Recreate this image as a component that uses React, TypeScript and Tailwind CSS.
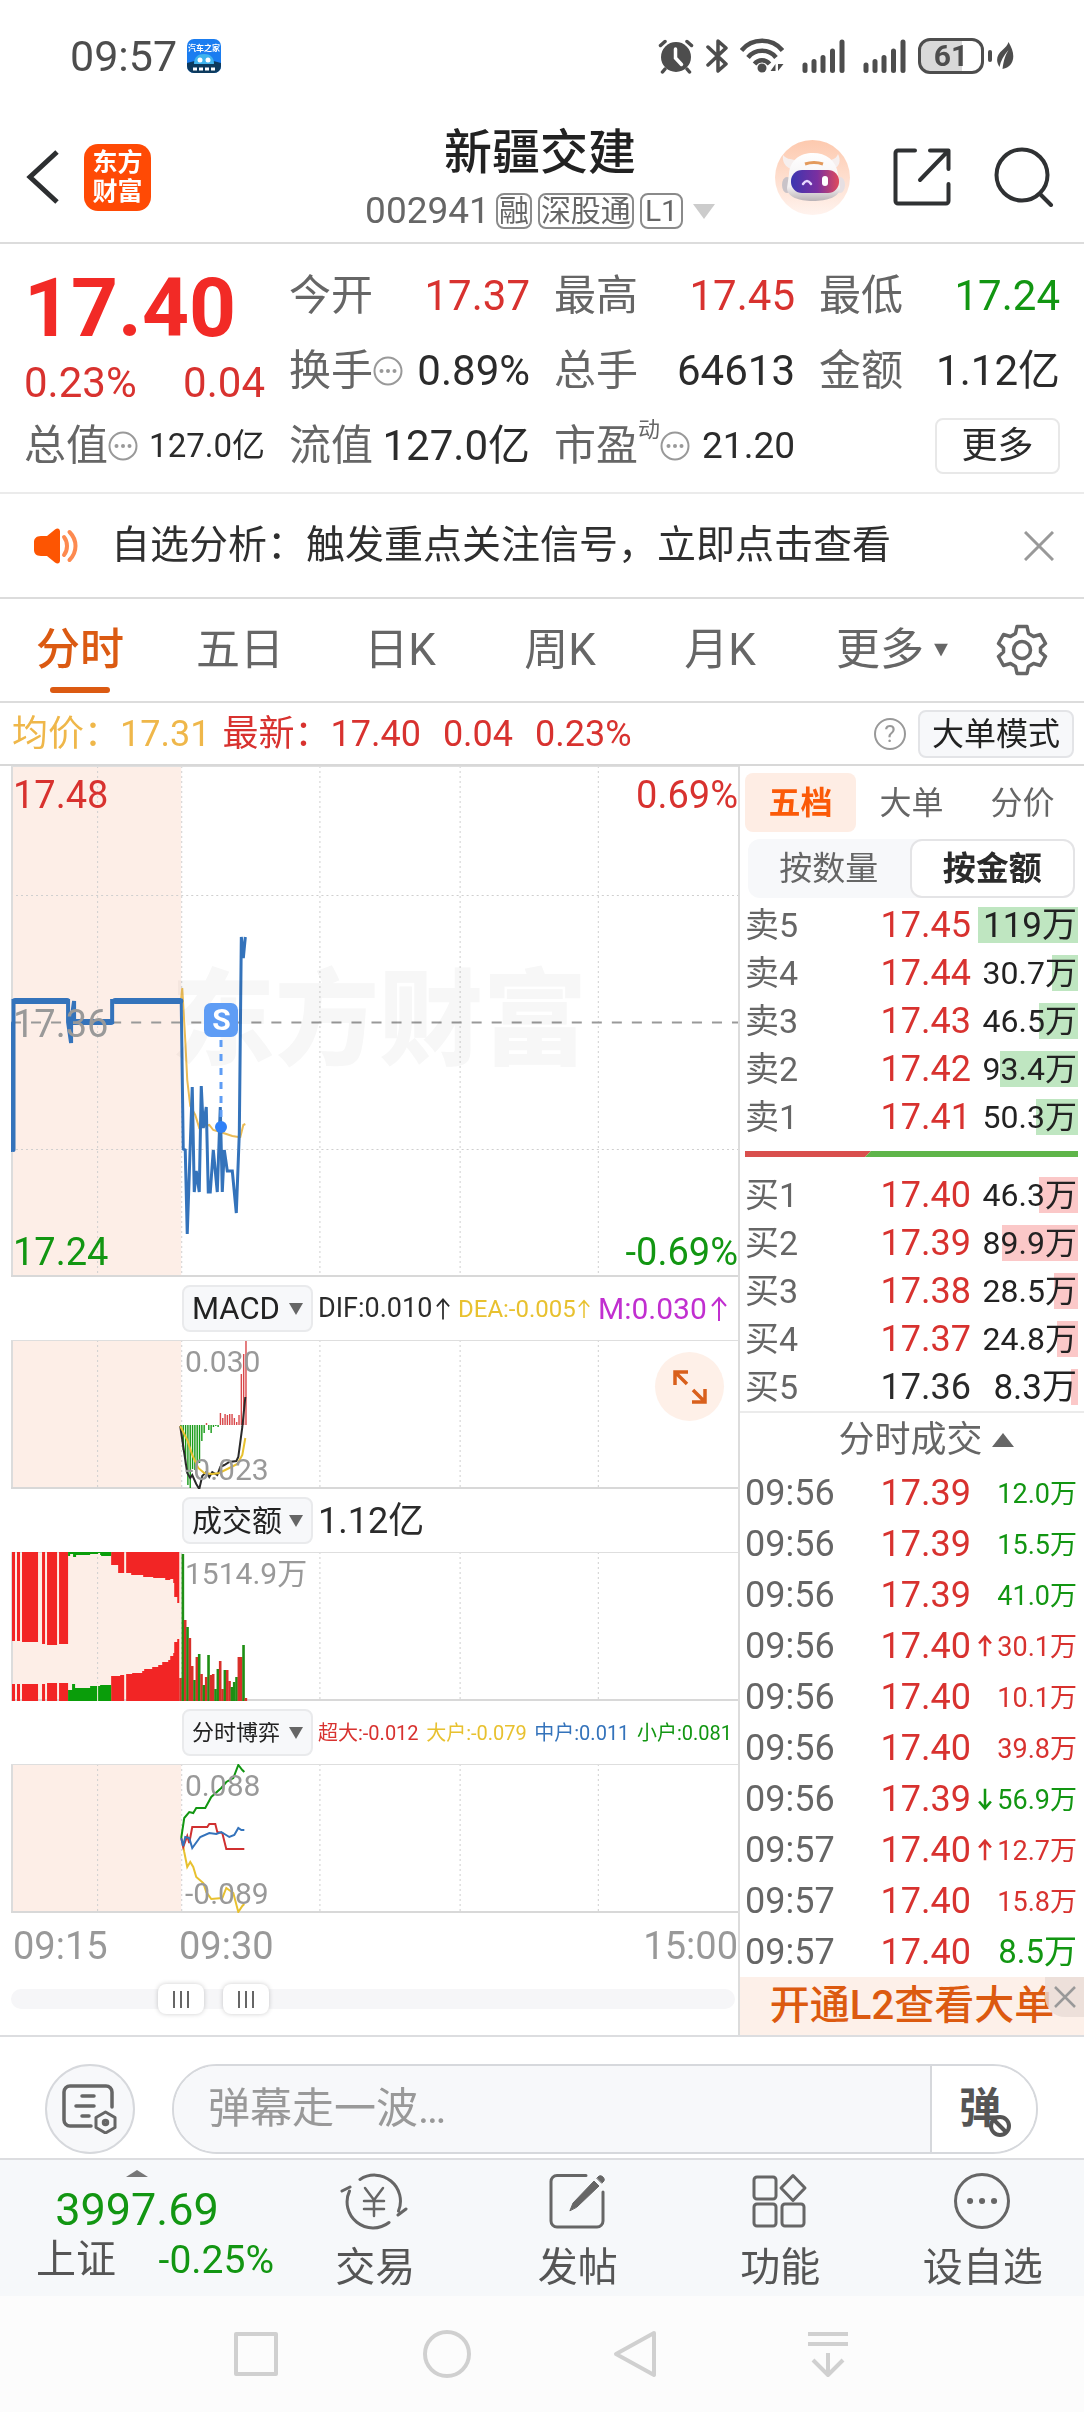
import type { ReactNode } from "react";

type Tone = "up" | "down" | "flat";

const toneText: Record<Tone, string> = {
  up: "text-[#d8322f]",
  down: "text-[#129612]",
  flat: "text-[#2b2b2b]",
};

type Level = { label: string; price: string; amount: number; text: string; tone: Tone };

const asks: Level[] = [
  { label: "卖5", price: "17.45", amount: 119, text: "119万", tone: "up" },
  { label: "卖4", price: "17.44", amount: 30.7, text: "30.7万", tone: "up" },
  { label: "卖3", price: "17.43", amount: 46.5, text: "46.5万", tone: "up" },
  { label: "卖2", price: "17.42", amount: 93.4, text: "93.4万", tone: "up" },
  { label: "卖1", price: "17.41", amount: 50.3, text: "50.3万", tone: "up" },
];

const bids: Level[] = [
  { label: "买1", price: "17.40", amount: 46.3, text: "46.3万", tone: "up" },
  { label: "买2", price: "17.39", amount: 89.9, text: "89.9万", tone: "up" },
  { label: "买3", price: "17.38", amount: 28.5, text: "28.5万", tone: "up" },
  { label: "买4", price: "17.37", amount: 24.8, text: "24.8万", tone: "up" },
  { label: "买5", price: "17.36", amount: 8.3, text: "8.3万", tone: "flat" },
];

type Trade = { time: string; price: string; volume: string; tone: Tone; dir?: "up" | "down" };

const trades: Trade[] = [
  { time: "09:56", price: "17.39", volume: "12.0万", tone: "down" },
  { time: "09:56", price: "17.39", volume: "15.5万", tone: "down" },
  { time: "09:56", price: "17.39", volume: "41.0万", tone: "down" },
  { time: "09:56", price: "17.40", volume: "30.1万", tone: "up", dir: "up" },
  { time: "09:56", price: "17.40", volume: "10.1万", tone: "up" },
  { time: "09:56", price: "17.40", volume: "39.8万", tone: "up" },
  { time: "09:56", price: "17.39", volume: "56.9万", tone: "down", dir: "down" },
  { time: "09:57", price: "17.40", volume: "12.7万", tone: "up", dir: "up" },
  { time: "09:57", price: "17.40", volume: "15.8万", tone: "up" },
  { time: "09:57", price: "17.40", volume: "8.5万", tone: "down" },
];

const macdBars = [
  -2, -25, -40, -60, -63, -44, -45, -42, -38, -16, -8, 2, -5, -8, -2, -1, -2, 12, 7, 11, 10, 11, 11,
  7, 3, 10, 51, 71, 84,
];

// positive = red bar, negative = green bar
const volumeBars = [
  23, -147, 81, -74, 63, 35, -21, 44, -47, 27, -16, 24, -46, 26, 27, -12, -32, 40, 12, -31, 31, 20,
  -14, -19, -24, 44, 44, -56, 3,
];

const auctionBars: [number, number, number, number][] = [
  [1, 3, 89, 17],
  [6, 3, 89, 17],
  [11, 16, 90, 17],
  [31, 3, 92, 17],
  [36, 10, 93, 18],
  [48, 9, 92, 18],
];

function Caret({ className }: { className: string }) {
  return (
    <svg viewBox="0 0 12 10" preserveAspectRatio="none" className={className} aria-hidden="true">
      <path d="M0 0h12L6 10z" fill="currentColor" />
    </svg>
  );
}

function Arrow({ down, className }: { down?: boolean; className: string }) {
  return (
    <svg viewBox="0 0 16 26" className={className} fill="none" stroke="currentColor" aria-hidden="true">
      <path d={down ? "M8 1v22M1 16l7 8 7-8" : "M8 25V3M1 10l7-8 7 8"} />
    </svg>
  );
}

function DotsCircle() {
  return (
    <svg viewBox="0 0 30 30" className="size-[30px] shrink-0" aria-hidden="true">
      <circle cx="15" cy="15" r="13.5" fill="none" stroke="#999" strokeWidth="2" />
      <g fill="#999">
        <circle cx="8.5" cy="15" r="2" />
        <circle cx="15" cy="15" r="2" />
        <circle cx="21.5" cy="15" r="2" />
      </g>
    </svg>
  );
}

function Signal() {
  return (
    <svg viewBox="0 0 43 34" className="h-[34px] w-[43px]" stroke="#4d4d4d" strokeWidth="5" strokeLinecap="round">
      <path d="M3 26v5.500M12 22.500v9M21 18.500v13M30.500 12v19.500M40 3v28.500" />
    </svg>
  );
}

function StatusBar() {
  return (
    <div className="flex h-28 items-center justify-between px-[70px] text-[#4d4d4d]">
      <div className="flex items-center gap-[10px]">
        <span className="text-[43px] leading-none">09:57</span>
        <svg viewBox="0 0 34 34" className="size-[34px]">
          <rect width="34" height="34" rx="7" fill="#1b7df0" />
          <path d="M0 24q17-6 34 0v3a7 7 0 0 1-7 7H7a7 7 0 0 1-7-7z" fill="#0c3a5e" />
          <path d="M7 25c0-7 4-10 10-10s10 3 10 10z" fill="#3fb4ee" />
          <circle cx="13" cy="21" r="2.500" fill="#fff" />
          <circle cx="21" cy="21" r="2.500" fill="#fff" />
          <text x="17" y="12" textAnchor="middle" fontSize="8" fontWeight="700" fill="#fff">汽车之家</text>
          <path d="M6 30h22" stroke="#fff" strokeWidth="3" strokeDasharray="4 2" />
        </svg>
      </div>
      <div className="flex items-center gap-3">
        <svg viewBox="0 0 36 36" className="size-9" fill="none" stroke="#4d4d4d" strokeLinecap="round">
          <circle cx="18" cy="19" r="15" fill="#4d4d4d" stroke="none" />
          <path d="M2.500 7.500 7 3.500M33.500 7.500 29 3.500M7 31l-2.500 3M29 31l2.500 3" strokeWidth="3.500" />
          <path d="M17.500 11v9l6 6.500" stroke="#fff" strokeWidth="3.500" />
        </svg>
        <svg viewBox="0 0 22 36" className="h-9 w-[22px]" fill="none" stroke="#4d4d4d" strokeWidth="3.500" strokeLinejoin="round" strokeLinecap="round">
          <path d="M2 9l18 17-8 7V3l8 7L2 27" />
        </svg>
        <svg viewBox="0 0 44 36" className="h-9 w-11" fill="none" stroke="#4d4d4d" strokeWidth="4.500">
          <path d="M1.500 12.500C12-.5 32-.5 42.500 12.500M8 19.500c7-9 21-9 28 0M14.500 26c4-5 11-5 15 0" />
          <circle cx="22" cy="30" r="4.500" fill="#4d4d4d" stroke="none" />
          <path d="M35.500 26v7h-5zM38 33v-7h5.500z" fill="#4d4d4d" stroke="none" />
        </svg>
        <div className="flex items-center gap-[18px] pl-[6px]">
          <Signal />
          <Signal />
        </div>
        <div className="flex items-center gap-1">
          <span className="flex h-9 w-[66px] items-center justify-center rounded-xl border-[3px] border-[#4d4d4d] bg-linear-to-r from-[#d9d9d9] from-68% to-white to-68% text-[30px] leading-none font-bold">
            61
          </span>
          <span className="h-3 w-1 rounded bg-[#4d4d4d]" />
          <svg viewBox="0 0 18 30" className="h-[30px] w-[18px]">
            <path d="M12.500 1c4 7 6 13 4 19-1.500 4.500-5 7-10 8 1-9 3-14 6-19-5 6-8 11-9 17-4-6-3-12 3-17 3-2.500 5-5 6-8z" fill="#4d4d4d" />
          </svg>
        </div>
      </div>
    </div>
  );
}

function Robot() {
  return (
    <svg viewBox="0 0 75 75" className="size-[75px]">
      <defs>
        <linearGradient id="halo" x1="0" y1="0" x2="0" y2="1">
          <stop offset="0" stopColor="#fdc9ae" />
          <stop offset="1" stopColor="#fff3ee" />
        </linearGradient>
        <linearGradient id="visor" x1="0" y1="0" x2="1" y2="0">
          <stop offset="0" stopColor="#3b36b0" />
          <stop offset=".55" stopColor="#7a2fa0" />
          <stop offset="1" stopColor="#e04a5c" />
        </linearGradient>
        <linearGradient id="shell" x1="0" y1="0" x2="0" y2="1">
          <stop offset="0" stopColor="#ffffff" />
          <stop offset=".7" stopColor="#f3f0f1" />
          <stop offset="1" stopColor="#b9b2b6" />
        </linearGradient>
      </defs>
      <circle cx="37.500" cy="37.500" r="37.500" fill="url(#halo)" />
      <path d="M16 29c-6-2-9-8-8-14 3 4 7 4 12 5zM56 20c4-1 6-3 7-6 3 6 2 12-4 15z" fill="#f6efee" />
      <ellipse cx="12" cy="45" rx="5" ry="8" fill="#c9c3c8" />
      <ellipse cx="65" cy="45" rx="5" ry="8" fill="#e6dfe2" />
      <path d="M14 34c1-14 11-21 24-21s23 7 25 21l2 14c0 9-13 13-27 13S12 57 12 48z" fill="url(#shell)" />
      <rect x="16" y="30" width="48" height="23" rx="11" fill="url(#visor)" />
      <path d="M30 24q9-3 18 0" stroke="#e39a5c" strokeWidth="3" fill="none" />
      <path d="M28 44q4-6 8 0" stroke="#e7d9ff" strokeWidth="2.500" fill="none" strokeLinecap="round" />
      <rect x="47" y="36" width="6" height="10" rx="3" fill="#fff" />
    </svg>
  );
}

function Header() {
  return (
    <header className="grid h-[132px] grid-cols-[1fr_auto_1fr] items-center border-b-2 border-[#dcdcdc] pr-[30px] pl-[26px]">
      <div className="flex items-center gap-6">
        <button type="button" aria-label="返回">
          <svg viewBox="0 0 34 54" className="h-[54px] w-[34px]" fill="none" stroke="#2d2f31" strokeWidth="5">
            <path d="M31 2 4 27l27 25" />
          </svg>
        </button>
        <a
          href="#home"
          className="flex size-[67px] flex-col items-center justify-center rounded-[14px] bg-[#ff4a05] text-[25px] leading-[29px] font-bold text-white"
        >
          <span>东方</span>
          <span>财富</span>
        </a>
      </div>
      <div className="flex flex-col items-center gap-[10px] pb-[2px] text-[#666]">
        <h1 className="text-5xl leading-[60px] font-medium text-[#222]">新疆交建</h1>
        <div className="flex items-center gap-[6px]">
          <span className="text-[37px] leading-9">002941</span>
          <span className="rounded-lg border-2 border-[#8a8a8a] px-px text-[30px] leading-8">融</span>
          <span className="rounded-lg border-2 border-[#8a8a8a] px-px text-[30px] leading-8">深股通</span>
          <span className="rounded-lg border-2 border-[#8a8a8a] px-[3px] text-[30px] leading-8">L1</span>
          <Caret className="ml-1 h-[15px] w-[22px] text-[#ccc]" />
        </div>
      </div>
      <div className="flex items-center justify-end gap-[43px]">
        <button type="button" aria-label="助手">
          <Robot />
        </button>
        <button type="button" aria-label="分享">
          <svg viewBox="0 0 58 58" className="size-[58px]" fill="none" stroke="#2f3133" strokeWidth="4" strokeLinecap="round" strokeLinejoin="round">
            <path d="M22 2.500H5A2.500 2.500 0 0 0 2.500 5v48A2.500 2.500 0 0 0 5 55.500h48a2.500 2.500 0 0 0 2.500-2.500V36M37 2.500h18.500V21M55 3 27 32" />
          </svg>
        </button>
        <button type="button" aria-label="搜索">
          <svg viewBox="0 0 60 60" className="size-[60px]" fill="none" stroke="#2f3133" strokeWidth="4" strokeLinecap="round">
            <circle cx="28" cy="28" r="25.500" />
            <path d="m46 47 11 11" />
          </svg>
        </button>
      </div>
    </header>
  );
}

function Stat({ label, value, tone = "flat", size = "text-[42px]", dots, sup }: {
  label: string;
  value: string;
  tone?: Tone;
  size?: string;
  dots?: boolean;
  sup?: string;
}) {
  return (
    <div className="flex h-[75px] items-center whitespace-nowrap">
      <span className="text-[42px] leading-none text-[#666]">{label}</span>
      {sup && <sup className="-top-4 self-center text-[22px] leading-none text-[#666]">{sup}</sup>}
      {dots && <DotsCircle />}
      <span className={`ml-auto leading-none ${size} ${toneText[tone]}`}>{value}</span>
    </div>
  );
}

function Quote() {
  return (
    <section className="grid grid-cols-4 gap-x-6 border-b-2 border-[#ebebeb] px-6 pt-[14px] pb-[9px]">
      <div className={toneText.up}>
        <p className="h-[100px] text-[82px] leading-[100px] font-bold text-[#f22a26]">17.40</p>
        <p className="flex h-[50px] items-center justify-between text-[42px] leading-none">
          <span>0.23%</span>
          <span>0.04</span>
        </p>
        <Stat label="总值" value="127.0亿" size="text-[33px]" dots />
      </div>
      <div>
        <Stat label="今开" value="17.37" tone="up" />
        <Stat label="换手" value="0.89%" dots />
        <Stat label="流值" value="127.0亿" />
      </div>
      <div>
        <Stat label="最高" value="17.45" tone="up" />
        <Stat label="总手" value="64613" />
        <Stat label="市盈" value="21.20" size="text-[37px]" sup="动" dots />
      </div>
      <div>
        <Stat label="最低" value="17.24" tone="down" />
        <Stat label="金额" value="1.12亿" />
        <div className="flex h-[75px] items-center justify-end">
          <button type="button" className="h-14 w-[125px] rounded-lg border-2 border-[#e8e8e8] text-4xl leading-none text-[#2b2b2b]">
            更多
          </button>
        </div>
      </div>
    </section>
  );
}

function Notice() {
  return (
    <div className="flex h-[105px] items-center border-b-2 border-[#dcdcdc] pr-[30px] pl-[33px]">
      <svg viewBox="0 0 46 38" className="h-[38px] w-[46px]">
        <path d="M8 9h6L22 2.500c2.500-2 5-1 5 2v29c0 3-2.500 4-5 2L14 29H8c-5 0-7-3-7-6v-8c0-3 2-6 7-6z" fill="#fd5502" />
        <path d="M31 10c4 5 4 13 0 18M36.500 5c8 8 8 20 0 28" fill="none" stroke="#fd8a50" strokeWidth="4" strokeLinecap="round" />
      </svg>
      <p className="ml-8 flex-1 text-[39px] leading-none whitespace-nowrap text-[#2f2f2f]">
        自选分析：触发重点关注信号，立即点击查看
      </p>
      <button type="button" aria-label="关闭">
        <svg viewBox="0 0 30 30" className="size-[30px]" stroke="#999" strokeWidth="3">
          <path d="m1 1 28 28M29 1 1 29" />
        </svg>
      </button>
    </div>
  );
}

function Gear() {
  return (
    <svg viewBox="0 0 52 52" className="size-[52px]" fill="none" stroke="#666" strokeWidth="3.500" strokeLinejoin="round">
      <path d="M21 2.500h10l1.500 7 5 3 7-2 5 9-5 4.500v4l5 4.500-5 9-7-2-5 3-1.500 7H21l-1.500-7-5-3-7 2-5-9 5-4.500v-4l-5-4.500 5-9 7 2 5-3z" />
      <circle cx="26" cy="26" r="8.500" />
    </svg>
  );
}

function PeriodTabs() {
  return (
    <nav className="flex h-26 border-b-2 border-[#dcdcdc] text-[44px] text-[#666]">
      <button type="button" className="relative flex-1 font-medium text-[#db5a12]">
        分时
        <span className="absolute bottom-2 left-1/2 h-[6px] w-[60px] -translate-x-1/2 rounded-full bg-[#db5a12]" />
      </button>
      {["五日", "日K", "周K", "月K"].map((tab) => (
        <button key={tab} type="button" className="flex-1">
          {tab}
        </button>
      ))}
      <button type="button" className="relative flex-1">
        更多
        <Caret className="absolute top-1/2 right-3 h-[13px] w-[14px] -translate-y-1/2" />
      </button>
      <button type="button" className="flex w-[124px] items-center justify-center" aria-label="设置">
        <Gear />
      </button>
    </nav>
  );
}

function PriceLine() {
  return (
    <div className="flex h-[63px] items-center border-b-2 border-[#d8d8d8] pr-[10px] pl-3 text-4xl leading-none whitespace-nowrap">
      <span className="text-[#efb74a]">均价：17.31</span>
      <span className={`ml-3 flex gap-[22px] ${toneText.up}`}>
        <span>最新：17.40</span>
        <span>0.04</span>
        <span>0.23%</span>
      </span>
      <button
        type="button"
        aria-label="帮助"
        className="mr-3 ml-auto size-8 rounded-full border-2 border-[#999] text-[24px] leading-[28px] text-[#999]"
      >
        ?
      </button>
      <button type="button" className="h-12 rounded-lg border-2 border-[#e3e4e7] bg-[#f7f8fa] px-3 text-[32px] leading-none text-[#222]">
        大单模式
      </button>
    </div>
  );
}

function Plot({ height, rows, children }: { height: number; rows?: number[]; children: ReactNode }) {
  return (
    <svg viewBox={`0 0 726 ${height}`} preserveAspectRatio="none" className="block h-full w-full" aria-hidden="true">
      <rect width="170" height={height} fill="#fdeee7" />
      <g stroke="#cfcfcf" strokeDasharray="2 3">
        {[86, 170, 308, 448, 586].map((x) => (
          <path key={x} d={`M${x}.5 0V${height}`} />
        ))}
        {rows?.map((y) => <path key={y} d={`M0 ${y}.5H726`} />)}
      </g>
      <path d={`M1 0V${height}`} stroke="#dcdcdc" strokeWidth="2" />
      <path d="M0 .5H726" stroke="#dedede" />
      <path d={`M0 ${height - 1}H726`} stroke="#d8d8d8" strokeWidth="2" />
      {children}
    </svg>
  );
}

function MainPlot() {
  return (
    <div className="relative h-[511px]">
      <span className="absolute inset-0 flex items-center pl-[160px] text-[104px] font-black text-[#f7f7f7]">
        东方财富
      </span>
      <div className="absolute inset-0 mix-blend-multiply">
        <Plot height={511} rows={[129, 383]}>
          <path d="M0 256.500H726" stroke="#999" strokeWidth="2" strokeDasharray="10 10" />
          <path
            d="M170 232l1-10 3 52 2 40 3 26 5 9 4 13 10-3 4 5 10 3 9 3 6 1h2l3-12 2-1"
            fill="none"
            stroke="#eabb55"
            strokeWidth="2"
          />
          <path
            d="M0 384V262M1 384V258M2.500 384V235H57V256L60 277V256L63 235V256H101V235H170"
            fill="none"
            stroke="#3473bb"
            strokeWidth="4"
            strokeLinecap="round"
          />
          <path d="M4 235H56M104 235H169M62 256H100" stroke="#3473bb" strokeWidth="6" strokeLinecap="round" />
          <path
            d="M170 235l2 148 2 1 2 84 5-147 2 105 2-21 3 21 2-106 2 42 3-21 2 85h2l3-42 4 42 3-85 2 85 2-42 3 21h5l4 42 3-80 2-196 2 21 2-21"
            fill="none"
            stroke="#3473bb"
            strokeWidth="3"
          />
        </Plot>
      </div>
      <div className="absolute inset-0 flex flex-col justify-between pt-[10px] pb-[6px] pl-[2px] text-[38px] leading-[38px]">
        <div className={`flex justify-between ${toneText.up}`}>
          <span>17.48</span>
          <span>0.69%</span>
        </div>
        <span className="text-[#999]">17.36</span>
        <div className={`flex justify-between ${toneText.down}`}>
          <span>17.24</span>
          <span>-0.69%</span>
        </div>
      </div>
      {/* Sell marker */}
      <div className="absolute top-[237px] left-[26.600%] flex w-[34px] flex-col items-center">
        <span className="flex size-[34px] items-center justify-center rounded-[7px] bg-[#5f9df5] text-[30px] leading-none font-bold text-white">
          S
        </span>
        <svg viewBox="0 0 12 96" className="h-24 w-3">
          <path d="M6 3v82" stroke="#5f9df5" strokeWidth="3" strokeDasharray="7 7" />
          <circle cx="6" cy="90" r="6" fill="#2f80f7" />
        </svg>
      </div>
    </div>
  );
}

function IndicatorHead({ name, size, children }: { name: string; size: string; children: ReactNode }) {
  return (
    <div className="flex h-[63px] items-center pl-[171px] whitespace-nowrap">
      <label className="relative h-[47px] w-[131px] shrink-0">
        <select
          aria-label="指标"
          className={`h-full w-full appearance-none rounded-lg border-2 border-[#e9eaec] bg-[#f7f8fa] pl-2 leading-none text-[#222] ${size}`}
        >
          <option>{name}</option>
        </select>
        <Caret className="pointer-events-none absolute top-1/2 right-[10px] h-3 w-[14px] -translate-y-1/2 text-[#666]" />
      </label>
      <div className="flex min-w-0 flex-1 items-center pl-[5px] leading-none">{children}</div>
    </div>
  );
}

function PlotLabels({ top, bottom }: { top: string; bottom?: string }) {
  return (
    <div className="absolute inset-0 flex flex-col justify-between pt-[7px] pb-1 pl-[174px] text-[30px] leading-[30px] text-[#999]">
      <span>{top}</span>
      {bottom && <span>{bottom}</span>}
    </div>
  );
}

function ChartColumn() {
  return (
    <div className="min-w-0 flex-1 pl-[11px]">
      <MainPlot />

      <IndicatorHead name="MACD" size="text-[31px]">
        <span className="flex flex-1 items-center gap-1 text-[27px] text-[#2b2b2b]">
          DIF:0.010
          <Arrow className="h-7 w-[14px] stroke-2" />
        </span>
        <span className="flex flex-1 items-center gap-[2px] text-[24px] text-[#e8c12f]">
          DEA:-0.005
          <Arrow className="h-7 w-3 stroke-2" />
        </span>
        <span className="flex flex-1 items-center gap-1 text-[30px] text-[#c12fd0]">
          M:0.030
          <Arrow className="h-7 w-4 stroke-2" />
        </span>
      </IndicatorHead>
      <div className="relative h-[149px]">
        <Plot height={149}>
          {macdBars.map((v, i) => (
            <rect
              key={i}
              x={169 + i * 2.32}
              y={v > 0 ? 85 - v : 85}
              width="1.400"
              height={Math.abs(v)}
              fill={v > 0 ? "#d8474a" : "#179a17"}
            />
          ))}
          <path
            d="M169 86 173 113 176 133 179 138 181 135 185 144 188 149 191 136 195 132 198 137 201 132 206 135 209 127 213 125 218 122 225 121 227 117 231 87 234 57"
            fill="none"
            stroke="#2b2b2b"
            strokeWidth="2"
          />
          <path
            d="M169 86 176 100 181 115 187 128 193 133 201 134 208 133 218 128 226 124 231 115 234 98"
            fill="none"
            stroke="#e8c12f"
            strokeWidth="2"
          />
        </Plot>
        <PlotLabels top="0.030" bottom="-0.023" />
        <button
          type="button"
          aria-label="展开"
          className="absolute top-3 right-[14px] flex size-[69px] items-center justify-center rounded-full bg-[#fef0e8]"
        >
          <svg viewBox="0 0 34 34" className="size-[34px]" fill="none" stroke="#d9601c" strokeWidth="3.500">
            <path d="M2 15V2h13M2 2l12 12M32 19v13H19M32 32 20 20" />
          </svg>
        </button>
      </div>

      <IndicatorHead name="成交额" size="text-[30px]">
        <span className="text-[36px] text-[#2b2b2b]">1.12亿</span>
      </IndicatorHead>
      <div className="relative h-[149px]">
        <Plot height={149}>
          <g fill="#f22525">
            {auctionBars.map(([x, w, top, bottom]) => (
              <path key={x} d={`M${x} 0h${w}v${top}h-${w}zM${x} ${149 - bottom}h${w}v${bottom}h-${w}z`} />
            ))}
            <path d="M100 0V13h7v8h6V0zM115 0V21h5v2h12v2h10v1h12v2h5v-1h3v4h1v14h3v6h2V0z" />
            <path d="M100 149v-25h9v-1h4v26zM115 149v-27h6v-1h10v-2h2v-2h8v-2h6v-2h4v-3h6v-2h2v-4h3v-3h1v-11h3v-3h2v62z" />
          </g>
          <g fill="#0a9d0a">
            <path d="M57 0V4h2V2h3v3h3V3h14V2h8V1h2v2h1v1h10V0z" />
            <path d="M57 149v-11h4v-6h3v4h15v-2h10v-1h11v16z" />
          </g>
          <path d="M86.500 131v18" stroke="#fdeee7" />
          {volumeBars.map((v, i) => (
            <rect
              key={i}
              x={168 + i * 2.33}
              y={149 - Math.abs(v)}
              width="2.600"
              height={Math.abs(v)}
              fill={v > 0 ? "#d8302a" : "#1e8f14"}
            />
          ))}
        </Plot>
        <PlotLabels top="1514.9万" />
      </div>

      <IndicatorHead name="分时博弈" size="text-[22px]">
        <div className="flex flex-1 justify-between pr-[6px] text-[20px]">
          <span className={toneText.up}>超大:-0.012</span>
          <span className="text-[#e8c12f]">大户:-0.079</span>
          <span className="text-[#3473bb]">中户:0.011</span>
          <span className={toneText.down}>小户:0.081</span>
        </div>
      </IndicatorHead>
      <div className="relative h-[149px]">
        <Plot height={149}>
          <g fill="none" strokeWidth="2">
            <path
              d="M171 76 173 88 176 103 179 98 182 103 185 113 192 119 195 128 200 135 211 134 215 124 222 129 227 148 231 142 233 140"
              stroke="#e8c12f"
            />
            <path
              d="M170 74 172 83 176 72 178 79 181 63 196 63 198 60 204 60 206 68 211 69 215 85 233 85"
              stroke="#d03030"
            />
            <path
              d="M170 74 172 82 174 73 178 74 181 84 189 73 198 69 205 70 210 68 218 73 223 71 227 64 230 66 233 66"
              stroke="#3473bb"
            />
            <path
              d="M170 74 173 54 178 48 182 49 185 44 194 44 200 33 210 24 215 18 222 14 227 1 231 6 233 8"
              stroke="#129612"
            />
          </g>
        </Plot>
        <PlotLabels top="0.088" bottom="-0.089" />
      </div>

      <div className="flex h-[66px] items-center pl-[2px] text-[38px] leading-none text-[#999]">
        <span className="w-[166px]">09:15</span>
        <span>09:30</span>
        <span className="ml-auto">15:00</span>
      </div>
      <div className="relative mr-[3px] mb-4 flex h-10 items-center">
        <div className="h-5 w-full rounded-full bg-[#f6f6f8]" />
        {[
          { label: "开始时间", value: 217 },
          { label: "结束时间", value: 313 },
        ].map((thumb) => (
          <input
            key={thumb.label}
            type="range"
            aria-label={thumb.label}
            max={1000}
            defaultValue={thumb.value}
            className="pointer-events-none absolute inset-0 h-full w-full appearance-none bg-transparent [&::-webkit-slider-thumb]:pointer-events-auto [&::-webkit-slider-thumb]:h-[30px] [&::-webkit-slider-thumb]:w-[46px] [&::-webkit-slider-thumb]:appearance-none [&::-webkit-slider-thumb]:rounded-lg [&::-webkit-slider-thumb]:shadow-[0_0_5px_rgba(0,0,0,0.2)] [&::-webkit-slider-thumb]:[background:linear-gradient(#666,#666)_15px_50%/2px_17px_no-repeat,linear-gradient(#666,#666)_22px_50%/2px_17px_no-repeat,linear-gradient(#666,#666)_29px_50%/2px_17px_no-repeat,#fff]"
          />
        ))}
      </div>
    </div>
  );
}

function BookTable({ levels, bar }: { levels: Level[]; bar: string }) {
  return (
    <table className="w-full">
      <tbody>
        {levels.map((level) => (
          <tr key={level.label} className="h-12 leading-none">
            <th scope="row" className="p-0 text-left text-[34px] font-normal text-[#666]">
              {level.label}
            </th>
            <td className={`p-0 text-right text-4xl ${toneText[level.tone]}`}>{level.price}</td>
            <td className="relative w-[107px] p-0 pr-px text-right text-[#222]">
              <span
                className={`absolute inset-y-[6px] right-0 ${bar}`}
                style={{ width: Math.round((level.amount / 119) * 100) }}
              />
              <span className={level.text.length > 4 ? "relative text-[32px]" : "relative text-[35px]"}>
                {level.text}
              </span>
            </td>
          </tr>
        ))}
      </tbody>
    </table>
  );
}

function BookColumn() {
  return (
    <aside className="flex w-[346px] shrink-0 flex-col border-l-2 border-[#dcdcdc] whitespace-nowrap">
      <div className="pr-[6px] pl-[5px] pt-[7px]">
        <div className="flex h-[59px] text-[32px] text-[#666]">
          <button type="button" className="flex-1 rounded-lg bg-[#feede4] font-bold text-[#fb5a08]">
            五档
          </button>
          <button type="button" className="flex-1">大单</button>
          <button type="button" className="flex-1">分价</button>
        </div>
        <div className="mx-[3px] mt-[7px] flex h-[59px] rounded-xl bg-[#f7f8fa] text-[33px] leading-none text-[#666]">
          <button type="button" className="flex-1">按数量</button>
          <button type="button" className="flex-1 rounded-xl border-2 border-[#e4e4e6] bg-white font-bold text-[#2b2b2b]">
            按金额
          </button>
        </div>
        <div className="mt-[3px]">
          <BookTable levels={asks} bar="bg-[#bfe6c1]" />
        </div>
        <svg viewBox="0 0 333 6" preserveAspectRatio="none" className="mt-[10px] mb-[14px] h-[6px] w-full">
          <path d="M0 0h126l-6 6H0z" fill="#d94f4d" />
          <path d="M126 0h207v6H120z" fill="#5fb54a" />
        </svg>
        <BookTable levels={bids} bar="bg-[#fbc8c8]" />
      </div>

      <h2 className="flex h-14 items-center justify-center gap-[9px] border-t-2 border-[#ebebeb] pl-7 text-4xl font-normal text-[#666]">
        分时成交
        <Caret className="h-[14px] w-[22px] rotate-180" />
      </h2>
      <table className="mr-[6px] ml-[5px] leading-none">
        <tbody>
          {trades.map((trade, i) => (
            <tr key={i} className="h-[51px]">
              <td className="p-0 text-4xl text-[#666]">{trade.time}</td>
              <td className={`p-0 text-right text-4xl ${toneText.up}`}>{trade.price}</td>
              <td className={`w-[107px] p-0 pr-px ${toneText[trade.tone]}`}>
                <span className="flex items-center justify-end gap-1">
                  {trade.dir && <Arrow down={trade.dir === "down"} className="-ml-1 h-[22px] w-4 stroke-3" />}
                  <span className={trade.volume.length > 4 ? "pt-1 text-[27px]" : "text-[33px]"}>{trade.volume}</span>
                </span>
              </td>
            </tr>
          ))}
        </tbody>
      </table>
      <div className="relative flex flex-1 items-center justify-center bg-[#fdf0e9]">
        <a href="#l2" className="text-[40px] leading-none font-medium text-[#dc5a10]">
          开通L2查看大单
        </a>
        <button
          type="button"
          aria-label="关闭"
          className="absolute top-0 right-0 flex h-10 w-[39px] items-center justify-center rounded-bl-[20px] bg-[#e8dcd6]/80"
        >
          <svg viewBox="0 0 22 22" className="size-[22px]" stroke="#999" strokeWidth="2.500">
            <path d="m1 1 20 20M21 1 1 21" />
          </svg>
        </button>
      </div>
    </aside>
  );
}

function CommentBar() {
  return (
    <form className="flex h-[125px] items-center gap-[37px] border-y-2 border-[#dcdde0] pt-[22px] pr-[46px] pl-[45px]">
      <button
        type="button"
        aria-label="弹幕设置"
        className="flex size-[90px] items-center justify-center rounded-full border-2 border-[#d6d8dc] bg-[#f7f8fa]"
      >
        <svg viewBox="0 0 56 50" className="h-[50px] w-14" fill="none" stroke="#666" strokeWidth="3.500" strokeLinecap="round" strokeLinejoin="round">
          <path d="M50 23V8a6 6 0 0 0-6-6H8a6 6 0 0 0-6 6v28a6 6 0 0 0 6 6h21M20 12h12M14 22h18M20 32h7" />
          <path d="m43.500 28 9.500 5.500v10L43.500 49 34 43.500v-10z" strokeWidth="3" />
          <circle cx="43.500" cy="38.500" r="2" />
        </svg>
      </button>
      <div className="flex h-[90px] flex-1 overflow-hidden rounded-full border-2 border-[#d6d8dc]">
        <input
          type="text"
          aria-label="弹幕"
          placeholder="弹幕走一波…"
          className="min-w-0 flex-1 bg-[#f7f8fa] pl-[34px] text-[42px] leading-none placeholder:text-[#999]"
        />
        <button
          type="button"
          className="relative w-[106px] border-l-2 border-[#d6d8dc] bg-white pr-2 text-[42px] leading-none font-bold text-[#555]"
        >
          弹
          <svg viewBox="0 0 24 24" className="absolute right-6 bottom-[14px] size-6" stroke="#555" strokeWidth="4">
            <circle cx="12" cy="12" r="9" fill="#fff" />
            <path d="m6 6 12 12" />
          </svg>
        </button>
      </div>
    </form>
  );
}

const actions = [
  {
    label: "交易",
    icon: (
      <>
        <path d="M14 6.500A26 26 0 0 1 52.500 38M52 42l8-6M43 49.500A26 26 0 0 1 3.500 18M4 14l-8 4" />
        <path d="m19 15 9 12 9-12M28 27v16M18 28h20M18 36h20" strokeWidth="2.500" />
      </>
    ),
  },
  {
    label: "发帖",
    icon: (
      <>
        <path d="M37 2.500H8A6 6 0 0 0 2 8.500V48a6 6 0 0 0 6 6h40a6 6 0 0 0 6-6V19" />
        <path d="M21 37.500 24 30 45 8l5 5-22 21zM48 5l2-2q2-1 4 1t1 4l-2 2z" fill="#666" strokeWidth="1" />
      </>
    ),
  },
  {
    label: "功能",
    icon: (
      <>
        <rect x="3" y="4" width="22" height="22" rx="3" />
        <rect x="3" y="31" width="22" height="22" rx="3" />
        <rect x="31" y="31" width="22" height="22" rx="3" />
        <path d="M42 2.500 54 15 42 27.500 30 15z" />
      </>
    ),
  },
  {
    label: "设自选",
    icon: (
      <>
        <circle cx="28" cy="28" r="26.500" />
        <path d="M16 28h.1M28 28h.1M40 28h.1" strokeWidth="6" />
      </>
    ),
  },
];

function ActionBar() {
  return (
    <nav className="flex h-[136px] bg-[#f6f8fa] text-[40px] leading-none text-[#555]">
      <a href="#index" className="flex w-[274px] flex-col items-center pt-[10px] whitespace-nowrap">
        <Caret className="h-[7px] w-[22px] rotate-180 text-[#777]" />
        <span className={`mt-[10px] text-[45px] leading-[46px] ${toneText.down}`}>3997.69</span>
        <span className="mt-1 flex w-full items-center justify-between pl-9">
          <span className="leading-[46px]">上证</span>
          <span className={`text-[39px] ${toneText.down}`}>-0.25%</span>
        </span>
      </a>
      {actions.map((action) => (
        <button key={action.label} type="button" className="flex flex-1 flex-col items-center gap-[18px] pt-3">
          <svg viewBox="-6 -1 70 58" className="h-[58px] w-[70px]" fill="none" stroke="#666" strokeWidth="3" strokeLinecap="round" strokeLinejoin="round">
            {action.icon}
          </svg>
          {action.label}
        </button>
      ))}
    </nav>
  );
}

function SystemNav() {
  const shapes = [
    { label: "最近任务", d: "M4 4h40v40H4z" },
    { label: "主屏幕", d: "M24 2a22 22 0 1 0 0 44 22 22 0 1 0 0-44z" },
    { label: "返回", d: "M41 3 3 24l38 21z" },
    { label: "收起", d: "M4 4h40M4 14h40M24 23v22M9 30l15 15 15-15" },
  ];
  return (
    <div className="flex h-29 items-center bg-[#fcfcfc] px-[161px]">
      {shapes.map((shape) => (
        <button key={shape.label} type="button" aria-label={shape.label} className="flex flex-1 justify-center">
          <svg viewBox="0 0 48 48" className="size-12" fill="none" stroke="#d0d0d0" strokeWidth="4" strokeLinejoin="round">
            <path d={shape.d} />
          </svg>
        </button>
      ))}
    </div>
  );
}

export default function App() {
  return (
    <div className="bg-white font-['Roboto','Noto_Sans_CJK_SC',sans-serif]">
      <StatusBar />
      <Header />
      <Quote />
      <Notice />
      <PeriodTabs />
      <PriceLine />
      <main className="flex">
        <ChartColumn />
        <BookColumn />
      </main>
      <CommentBar />
      <ActionBar />
      <SystemNav />
    </div>
  );
}
